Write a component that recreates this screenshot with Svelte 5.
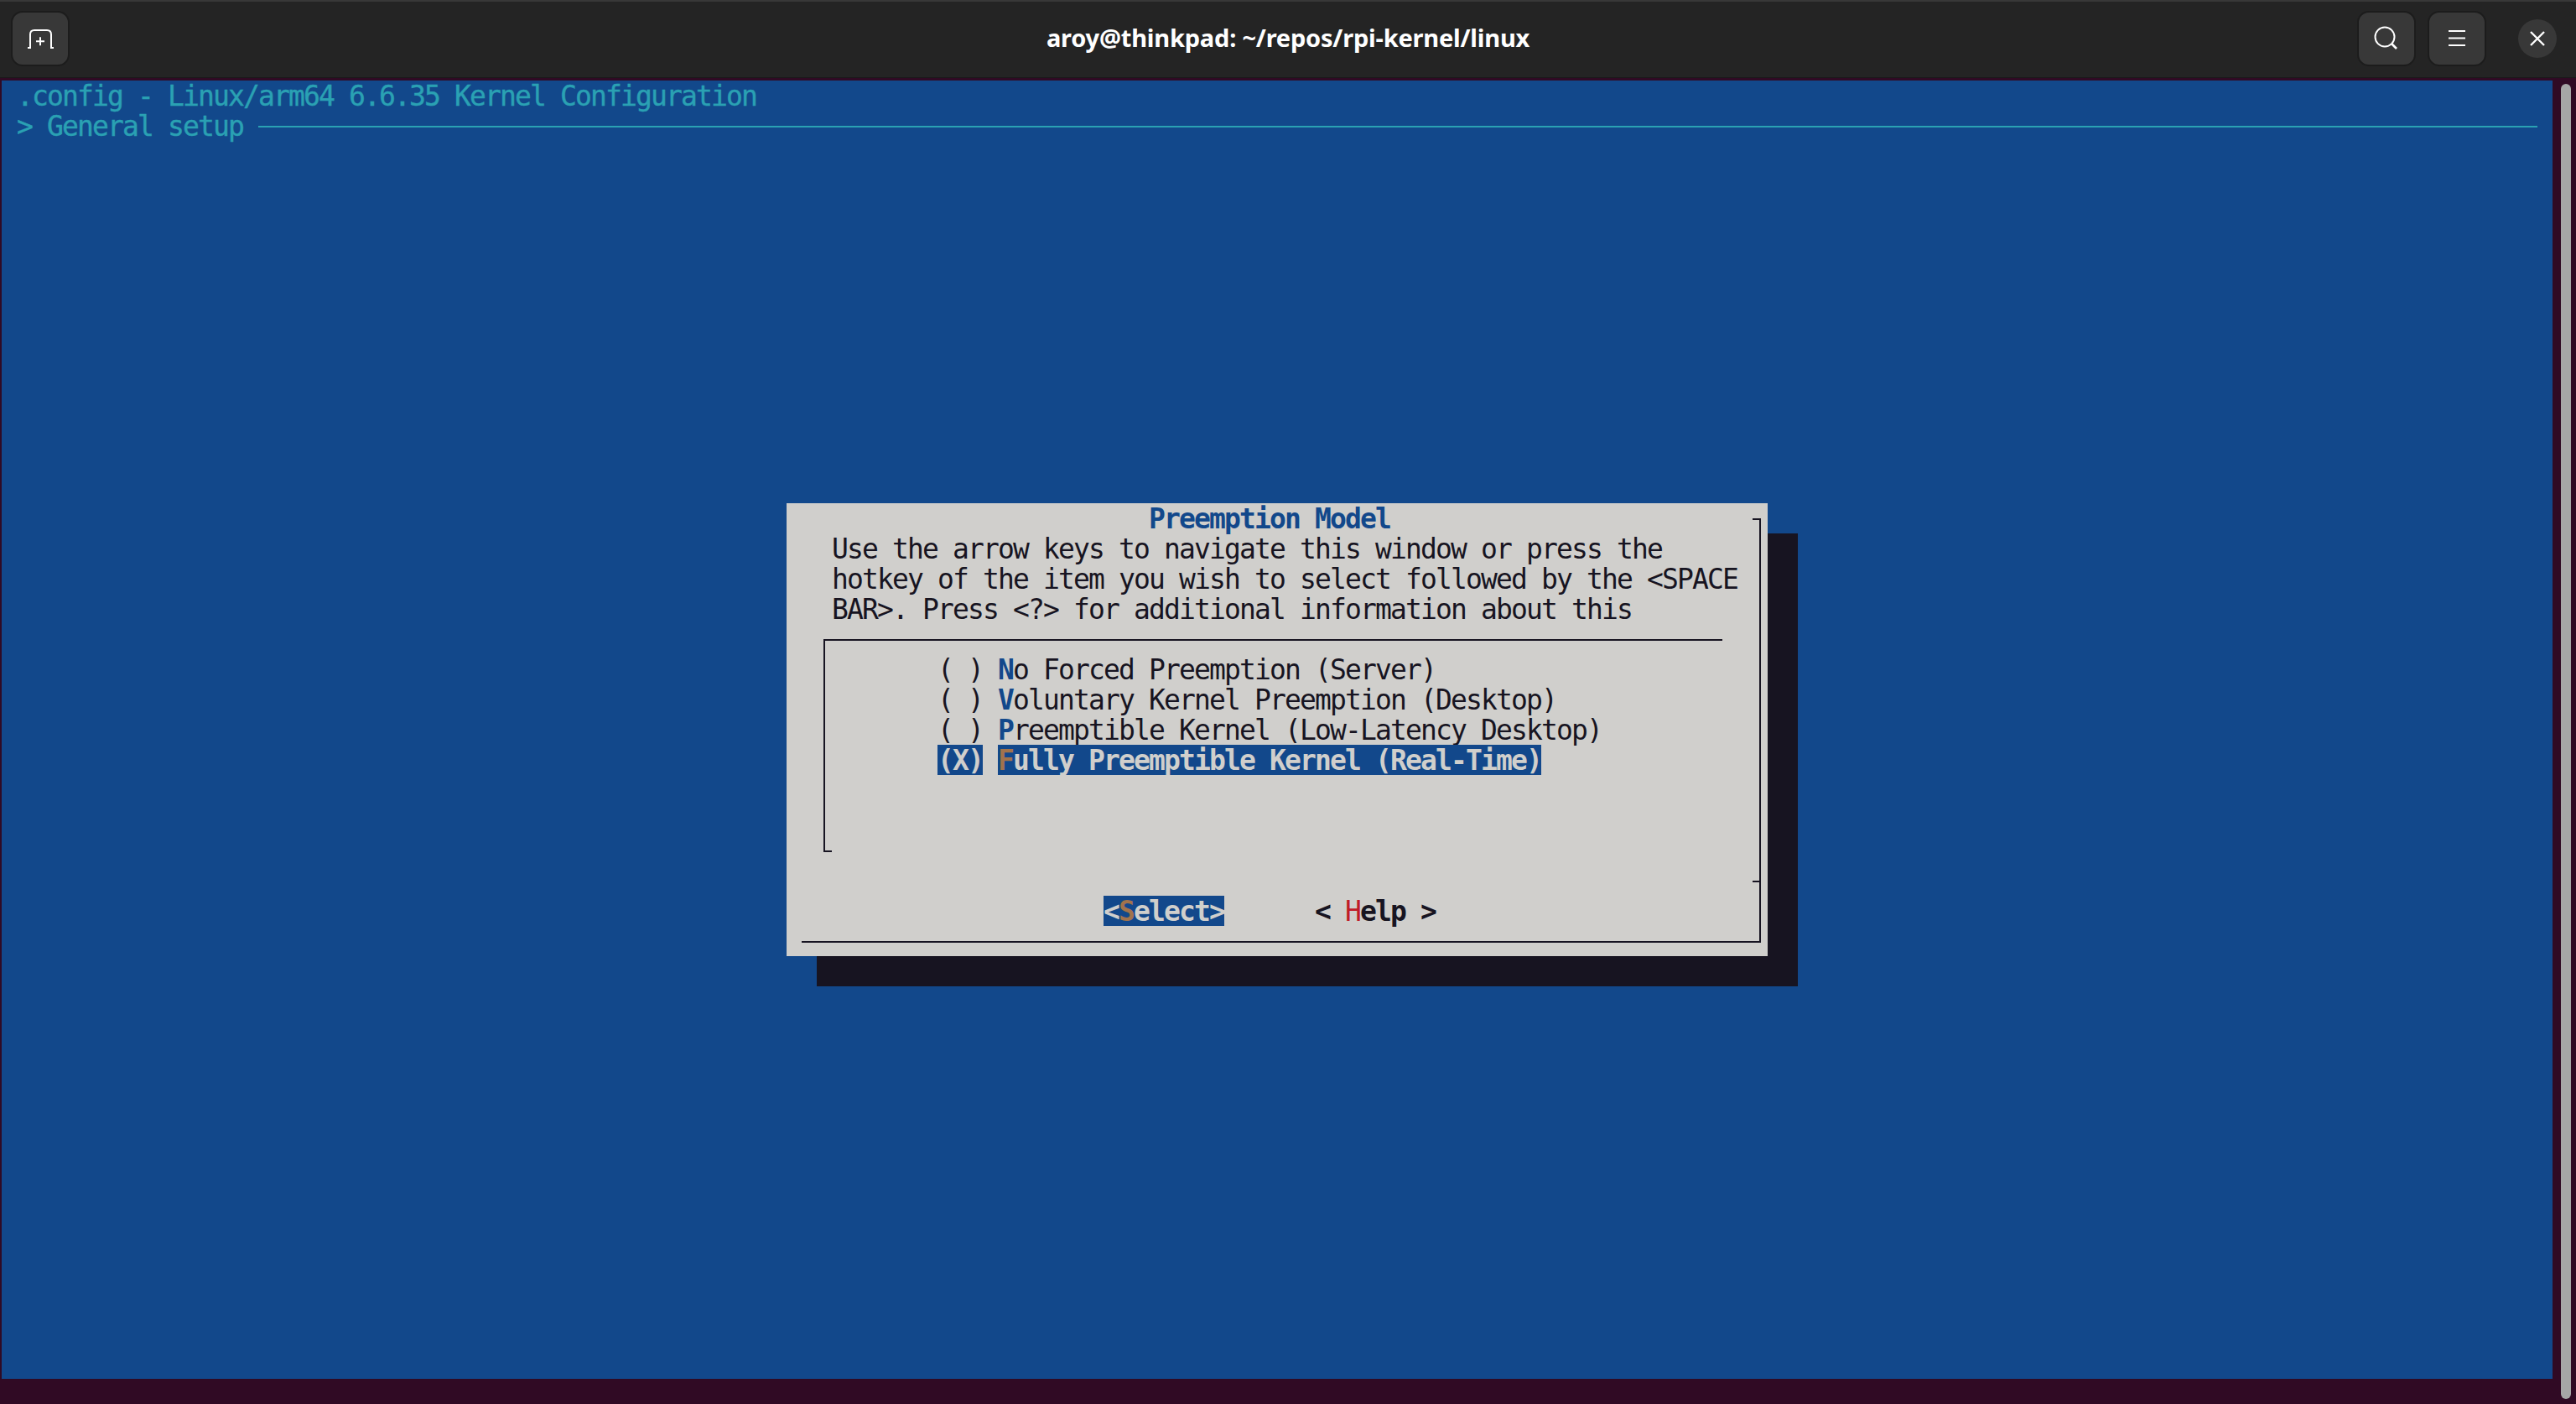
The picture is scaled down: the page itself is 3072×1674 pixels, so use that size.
<script>
    const options = [
        { hot: "N", rest: "o Forced Preemption (Server)" },
        { hot: "V", rest: "oluntary Kernel Preemption (Desktop)" },
        { hot: "P", rest: "reemptible Kernel (Low-Latency Desktop)" },
        { hot: "F", rest: "ully Preemptible Kernel (Real-Time)", selected: true }
    ];
    const help = [
        "Use the arrow keys to navigate this window or press the",
        "hotkey of the item you wish to select followed by the <SPACE",
        "BAR>. Press <?> for additional information about this"
    ];
</script>

<div class="window">
    <header class="titlebar">
        <div class="left">
            <button class="btn" aria-label="New tab">
                <svg width="34" height="32" viewBox="0 0 34 32" fill="none" stroke="#fff" stroke-width="2">
                    <path d="M2 27h3V11q0-5 5-5h15q5 0 5 5v16h3" />
                    <path d="M12 19.3h10M17 14.3v10" />
                </svg>
            </button>
        </div>
        <div class="title">aroy@thinkpad: ~/repos/rpi-kernel/linux</div>
        <div class="right">
            <button class="btn" aria-label="Search">
                <svg width="32" height="32" viewBox="0 0 32 32" fill="none" stroke="#fff" stroke-width="2">
                    <circle cx="14" cy="14" r="11.5" />
                    <path d="M22.5 22.5l5.5 5.5" stroke-width="2.6" />
                </svg>
            </button>
            <button class="btn" aria-label="Menu">
                <svg width="32" height="32" viewBox="0 0 32 32" fill="none" stroke="#fff" stroke-width="2">
                    <path d="M6 7h20M6 15.5h20M6 24h20" />
                </svg>
            </button>
            <button class="close" aria-label="Close">
                <svg width="20" height="20" viewBox="0 0 20 20" fill="none" stroke="#fff" stroke-width="2.4">
                    <path d="M2 2l16 16M18 2L2 18" />
                </svg>
            </button>
        </div>
    </header>

    <main class="main">
        <div class="term">
            <div class="cell config">.config - Linux/arm64 6.6.35 Kernel Configuration</div>
            <div class="cell crumb">&gt; General setup</div>
            <div class="crumb-line"></div>

            <div class="shadow"></div>
            <div class="dialog">
                <div class="frame"></div>
                <div class="tick tick-top"></div>
                <div class="tick tick-mid"></div>
                <div class="list-box"></div>
                <div class="tick-foot"></div>

                <div class="cell dialog-title">Preemption Model</div>
                {#each help as line, i}
                    <div class="cell help" style="grid-row: {i + 2}">{line}</div>
                {/each}

                {#each options as opt, i}
                    <div class="cell radio" class:sel={opt.selected} style="grid-row: {i + 6}">{opt.selected ? "(X)" : "( )"}</div>
                    <div class="cell label" class:sel={opt.selected} style="grid-row: {i + 6}"><span class="hot">{opt.hot}</span>{opt.rest}</div>
                {/each}

                <div class="cell action sel">&lt;<span class="hot">S</span>elect&gt;</div>
                <div class="cell action help-btn">&lt; <span class="red">H</span>elp &gt;</div>
            </div>
        </div>
        <div class="scrollbar"><div class="thumb"></div></div>
    </main>
</div>

<style>
    :global(body) {
        margin: 0;
        background: #300a24;
    }

    .window {
        width: 3072px;
        height: 1674px;
        overflow: hidden;
        background: #300a24;
    }

    .titlebar {
        height: 90px;
        display: grid;
        grid-template-columns: 1fr auto 1fr;
        align-items: start;
        background: #242424;
        border-top: 2px solid #383838;
        border-bottom: 1px solid #1a1a1a;
    }

    .left {
        padding: 11px 0 0 13px;
    }

    .right {
        display: flex;
        justify-content: flex-end;
        align-items: flex-start;
        gap: 14px;
        padding: 11px 23px 0 0;
    }

    .title {
        padding-top: 22px;
        color: #fff;
        font: 700 29px/42px "Noto Sans", sans-serif;
        letter-spacing: -0.2px;
    }

    .btn {
        width: 70px;
        height: 66px;
        padding: 0;
        display: flex;
        align-items: center;
        justify-content: center;
        box-sizing: border-box;
        background: #383838;
        border: 2px solid #1c1c1c;
        border-radius: 14px;
    }

    .close {
        width: 46px;
        height: 46px;
        margin: 10px 0 0 24px;
        padding: 0;
        display: flex;
        align-items: center;
        justify-content: center;
        background: #383838;
        border: 0;
        border-radius: 50%;
    }

    .main {
        display: flex;
        padding-top: 3px;
        height: 1578px;
    }

    .term {
        margin-left: 2px;
        width: 3042px;
        height: 1548px;
        display: grid;
        grid-template-columns: repeat(169, 18px);
        grid-template-rows: repeat(43, 36px);
        background: #12488b;
    }

    .scrollbar {
        width: 12px;
        margin: 4px 6px 6px 10px;
    }

    .thumb {
        height: 100%;
        background: #a6a6a6;
        border-radius: 6px;
    }

    .cell {
        font: 400 33px/38px "DejaVu Sans Mono", monospace;
        letter-spacing: calc(18px - 1ch);
        white-space: pre;
        width: max-content;
        height: 36px;
    }

    .config {
        grid-column: 2;
        grid-row: 1;
        color: #2aa1b3;
        -webkit-text-stroke: 0.4px #2aa1b3;
    }

    .crumb {
        grid-column: 2;
        grid-row: 2;
        color: #2aa1b3;
        -webkit-text-stroke: 0.4px #2aa1b3;
    }

    .crumb-line {
        grid-column: 18 / 169;
        grid-row: 2;
        height: 2px;
        margin-top: 18px;
        background: #2aa1b3;
    }

    .shadow {
        grid-column: 55 / span 65;
        grid-row: 16 / span 15;
        background: #171421;
    }

    .dialog {
        grid-column: 53 / span 65;
        grid-row: 15 / span 15;
        display: grid;
        grid-template-columns: repeat(65, 18px);
        grid-template-rows: repeat(15, 36px);
        background: #d0cfcc;
        color: #171421;
    }

    .frame {
        grid-column: 2 / 66;
        grid-row: 1 / 16;
        margin: 18px 8px 16px 0;
        border-right: 2px solid #171421;
        border-bottom: 2px solid #171421;
    }

    .tick {
        grid-column: 65;
        width: 10px;
        height: 2px;
        margin-top: 18px;
        background: #171421;
    }

    .tick-top {
        grid-row: 1;
    }

    .tick-mid {
        grid-row: 13;
    }

    .list-box {
        grid-column: 3 / 63;
        grid-row: 5 / 13;
        margin: 18px 0 16px 8px;
        border-top: 2px solid #171421;
        border-left: 2px solid #171421;
    }

    .tick-foot {
        grid-column: 3;
        grid-row: 12;
        width: 8px;
        height: 2px;
        margin: 18px 0 0 10px;
        background: #171421;
    }

    .dialog-title {
        grid-column: 25;
        grid-row: 1;
        font-weight: 700;
        color: #12488b;
    }

    .help {
        grid-column: 4;
    }

    .radio {
        grid-column: 11;
    }

    .label {
        grid-column: 15;
    }

    .hot {
        font-weight: 700;
        color: #12488b;
    }

    .sel {
        background: #12488b;
        color: #d0cfcc;
        font-weight: 700;
    }

    .sel .hot {
        color: #a2734c;
    }

    .action {
        grid-row: 14;
        font-weight: 700;
    }

    .action.sel {
        grid-column: 22;
    }

    .help-btn {
        grid-column: 36;
    }

    .red {
        font-weight: 400;
        color: #c01c28;
    }
</style>
